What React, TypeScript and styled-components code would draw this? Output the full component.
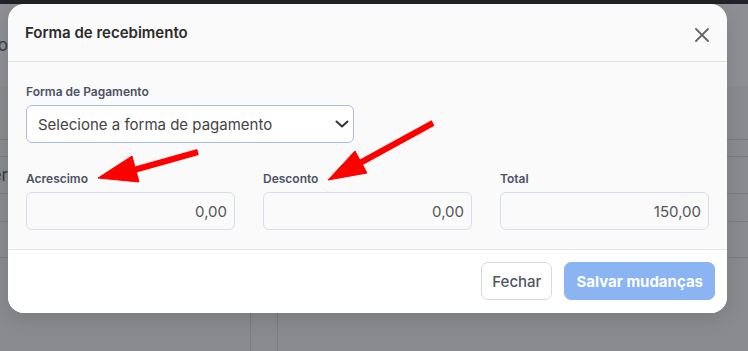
import React from 'react';
import styled, { createGlobalStyle } from 'styled-components';

const GlobalStyle = createGlobalStyle`
  * { box-sizing: border-box; }
  html, body { margin: 0; padding: 0; }
  body {
    font-family: Inter, "Noto Sans", sans-serif;
    overflow: hidden;
    -webkit-font-smoothing: antialiased;
  }
`;

// page behind the modal (already dimmed by the backdrop)
const Screen = styled.div`
  position: relative;
  width: 100vw;
  height: 100vh;
  overflow: hidden;
  background: #8a8b8f;
`;

const Underlay = styled.div`
  display: flex;
  flex-direction: column;
  height: 100%;
`;

const TopBar = styled.div`
  height: 4px;
  background: #1f2327;
`;

const UnderHeader = styled.div`
  height: 82px;
  display: flex;
  align-items: center;
  justify-content: space-between;
  background: #8e8f94;
`;

const Clip = styled.div<{ $align: 'start' | 'end' }>`
  width: 8px;
  overflow: hidden;
  display: flex;
  justify-content: ${(p) => (p.$align === 'end' ? 'flex-end' : 'flex-start')};
  white-space: nowrap;
  font-size: 17px;
  color: #3a3c41;
`;

const UnderRows = styled.div`
  flex: 1;
  display: flex;
  flex-direction: column;
`;

const UnderRow = styled.div<{ $h: number }>`
  height: ${(p) => p.$h}px;
  border-bottom: 1px solid #7c7d82;
  display: flex;
  align-items: center;
  justify-content: space-between;
`;

const UnderCols = styled.div`
  flex: 1;
  display: grid;
  grid-template-columns: 250px 27px 1fr;
  > div + div { border-left: 1px solid #7a7b80; }
`;

const Backdrop = styled.div`
  position: absolute;
  inset: 0;
  padding: 4px 21px 0 8px;
`;

const Modal = styled.div`
  width: 719px;
  background: #fafafa;
  border-radius: 16px;
  overflow: hidden;
  box-shadow: 0 6px 20px rgba(0, 0, 0, 0.12);
`;

const Header = styled.div`
  height: 58px;
  padding: 0 12px 0 17px;
  display: flex;
  align-items: center;
  justify-content: space-between;
  border-bottom: 1px solid #e3e3e3;
`;

const Title = styled.h5`
  margin: 0;
  font-size: 15px;
  font-weight: 600;
  color: #2b2b2b;
`;

const CloseButton = styled.button`
  width: 26px;
  height: 26px;
  border: 0;
  padding: 0;
  background: none;
  display: flex;
  align-items: center;
  justify-content: center;
  margin-top: 4px;
`;

const Body = styled.div`
  padding: 22px 18px 19px 18px;
  display: flex;
  flex-direction: column;
  gap: 28px;
`;

const Grid = styled.div<{ $cols: number }>`
  display: grid;
  grid-template-columns: repeat(${(p) => p.$cols}, 1fr);
  column-gap: 28px;
`;

const Field = styled.div`
  display: flex;
  flex-direction: column;
  gap: 5px;
`;

const Label = styled.label`
  font-size: 12px;
  line-height: 16px;
  font-weight: 600;
  color: #4a5263;
`;

const SelectBox = styled.div`
  height: 38px;
  border: 1px solid #a6bfe9;
  border-radius: 6px;
  background: #fff;
  padding: 0 2px 0 11px;
  display: flex;
  align-items: center;
  justify-content: space-between;
  font-size: 15px;
  color: #444;
`;

const Input = styled.div`
  height: 38px;
  border: 1px solid #d7deee;
  border-radius: 6px;
  background: #fafafa;
  padding: 0 7px;
  display: flex;
  align-items: center;
  justify-content: flex-end;
  font-size: 15px;
  color: #555;
`;

const Footer = styled.div`
  background: #fff;
  border-top: 1px solid #e6e6e6;
  padding: 12px 12px 13px;
  display: flex;
  justify-content: flex-end;
  gap: 12px;
`;

const Button = styled.button<{ $primary?: boolean }>`
  height: 38px;
  border-radius: 7px;
  font-family: inherit;
  font-size: 15px;
  font-weight: ${(p) => (p.$primary ? 700 : 500)};
  padding: 0 ${(p) => (p.$primary ? 11 : 10)}px;
  border: 1px solid ${(p) => (p.$primary ? '#8ab4f2' : '#d9d9d9')};
  background: ${(p) => (p.$primary ? '#8ab4f2' : '#fff')};
  color: ${(p) => (p.$primary ? '#fff' : '#4d5563')};
`;

const ArrowLayer = styled.svg`
  position: absolute;
  left: 0;
  top: 0;
  pointer-events: none;
`;

const Chevron = () => (
  <svg width="18" height="18" viewBox="0 0 18 18">
    <path d="M3.5 6.5 L9 11.5 L14.5 6.5" fill="none" stroke="#333" strokeWidth="2" strokeLinecap="round" strokeLinejoin="round" />
  </svg>
);

const CloseIcon = () => (
  <svg width="14" height="14" viewBox="0 0 14 14">
    <path d="M1 1 L13 13 M13 1 L1 13" stroke="#666" strokeWidth="1.8" strokeLinecap="round" />
  </svg>
);

const fields = [
  { label: 'Acrescimo', value: '0,00' },
  { label: 'Desconto', value: '0,00' },
  { label: 'Total', value: '150,00' },
];

export default function App() {
  return (
    <Screen>
      <GlobalStyle />
      <Underlay>
        <TopBar />
        <UnderHeader>
          <Clip $align="end">Pedido</Clip>
        </UnderHeader>
        <UnderRows>
          <UnderRow $h={54} />
          <UnderRow $h={17} />
          <UnderRow $h={37}>
            <Clip $align="end">Fornecer</Clip>
          </UnderRow>
          <UnderRow $h={28} />
          <UnderRow $h={36} />
          <UnderCols>
            <div />
            <div />
            <div />
          </UnderCols>
        </UnderRows>
      </Underlay>

      <Backdrop>
        <Modal>
          <Header>
            <Title>Forma de recebimento</Title>
            <CloseButton aria-label="Fechar">
              <CloseIcon />
            </CloseButton>
          </Header>
          <Body>
            <Grid $cols={2}>
              <Field>
                <Label>Forma de Pagamento</Label>
                <SelectBox>
                  <span>Selecione a forma de pagamento</span>
                  <Chevron />
                </SelectBox>
              </Field>
            </Grid>
            <Grid $cols={3}>
              {fields.map((f) => (
                <Field key={f.label}>
                  <Label>{f.label}</Label>
                  <Input>{f.value}</Input>
                </Field>
              ))}
            </Grid>
          </Body>
          <Footer>
            <Button>Fechar</Button>
            <Button $primary>Salvar mudanças</Button>
          </Footer>
        </Modal>
      </Backdrop>

      {/* annotation arrows drawn over the screenshot */}
      <ArrowLayer width="748" height="351" viewBox="0 0 748 351">
        <g fill="#ff0000" stroke="#ff0000">
          <line x1="198" y1="152" x2="134" y2="170" strokeWidth="6" />
          <polygon points="98,178 132,156 139,182" strokeWidth="1" />
          <line x1="433" y1="123" x2="360" y2="163" strokeWidth="6" />
          <polygon points="328,180 355,151 367,173" strokeWidth="1" />
        </g>
      </ArrowLayer>
    </Screen>
  );
}
